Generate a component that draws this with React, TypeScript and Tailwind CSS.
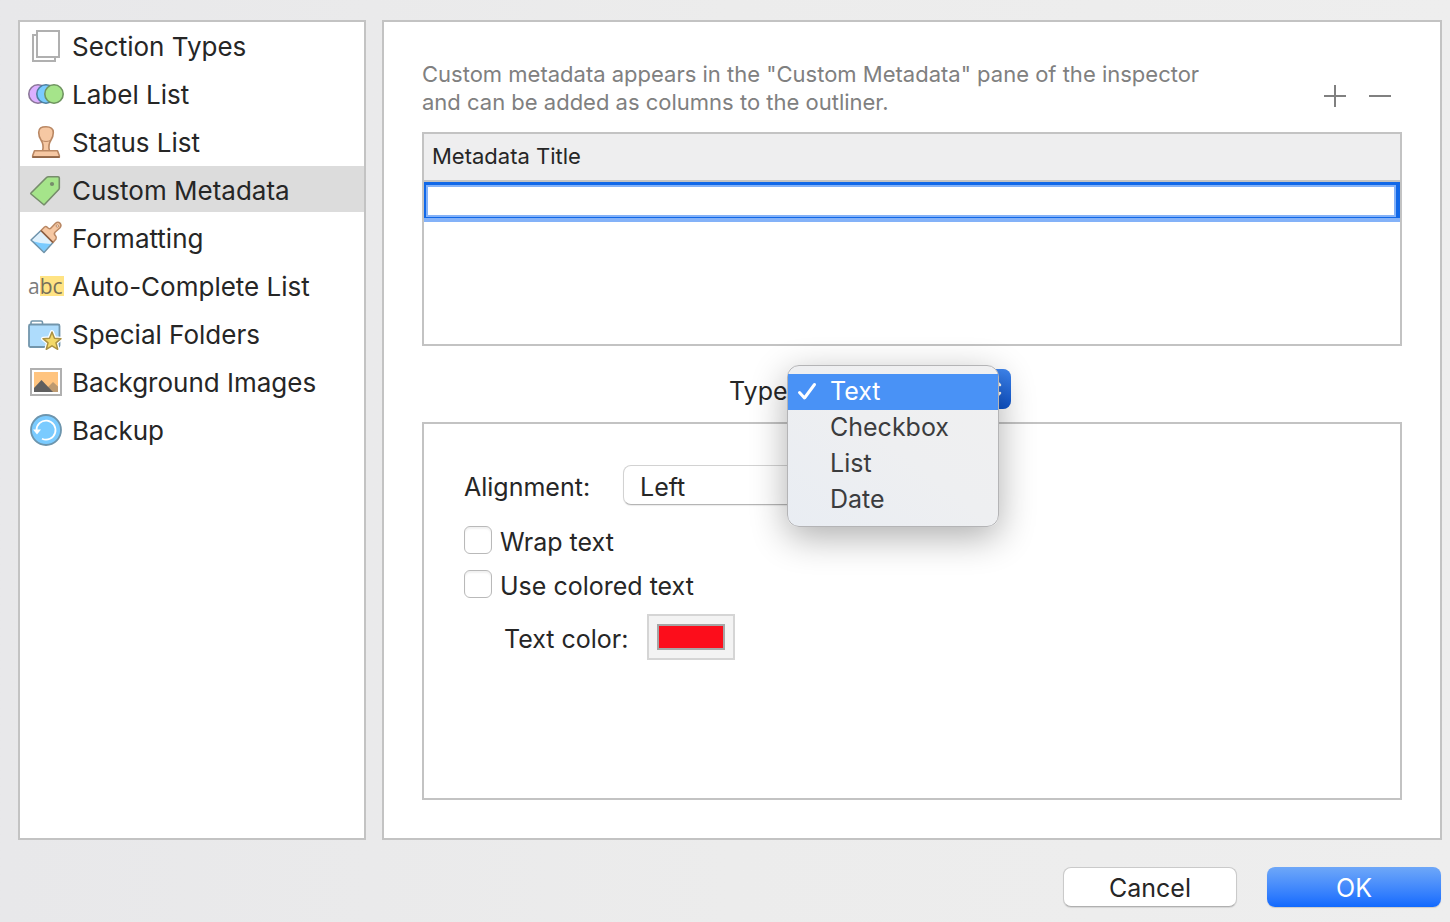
import React, { useState } from 'react';
import { clsx } from 'clsx';

const SectionTypesIcon = () => (
  <svg className="w-9 h-9" viewBox="0 0 36 36" fill="#fff" stroke="#b0b0b0" strokeWidth="2">
    <rect x="5" y="8" width="22" height="26" />
    <rect x="9" y="4" width="22" height="26" />
  </svg>
);

const LabelListIcon = () => (
  <svg className="w-9 h-9" viewBox="0 0 36 36" strokeWidth="1.6">
    <circle cx="10" cy="19" r="9.2" fill="#dcb0ff" stroke="#8a7599" />
    <circle cx="18" cy="19" r="9.2" fill="#7acbff" stroke="#4d7f9e" />
    <circle cx="26" cy="19" r="9.2" fill="#a5e48a" stroke="#6f9460" />
  </svg>
);

const StatusListIcon = () => (
  <svg className="w-9 h-9" viewBox="0 0 36 36" fill="#f6c8a3" stroke="#b98763" strokeWidth="1.6" strokeLinejoin="round">
    <path d="M14.5 28c1.2-4 .8-7.500-1.500-11-1.600-2.500-2.300-4.500-2.300-7.500C10.700 5 13.500 3.800 18 3.800s7.300 1.200 7.300 5.700c0 3-.7 5-2.300 7.500-2.300 3.500-2.700 7-1.500 11z" />
    <path d="M13.500 17.500c3 1.300 6 1.300 9 0" fill="none" strokeWidth="1" />
    <path d="M6.500 27.800h23l1.800 4.700v1.700H4.700v-1.700z" />
    <path d="M4.500 34h27" stroke="#8a5f42" />
  </svg>
);

const CustomMetadataIcon = () => (
  <svg className="w-9 h-9" viewBox="0 0 36 36" strokeLinejoin="round">
    <path d="M3 22 18.500 6.500Q19.300 5.800 20.500 5.800H30Q31.300 5.800 31.300 7V17Q31.300 18 30.500 18.800L16.500 33.500Q16 34 15.500 33.500L3 23Q2.500 22.500 3 22z" fill="#a5e48a" stroke="#768c6b" strokeWidth="1.600" />
    <circle cx="24" cy="13" r="2.100" fill="#768c6b" />
  </svg>
);

const FormattingIcon = () => (
  <svg className="w-9 h-9" viewBox="0 0 36 36" strokeLinejoin="round" strokeWidth="1.500">
    <path d="M3 21 13 11.500 25 23.500 16 33.500z" fill="#dff1fd" />
    <path d="M4 22Q13 25 23 25L16 32.500z" fill="#7acbff" />
    <path d="M13 11.500 3 21 16 33.500 25 23.500" fill="none" stroke="#6d93ab" />
    <path d="M13 11.500 16.500 8Q18 7 19.500 8.500 21.500 10.500 23 9L27.500 4.300Q30 2 32 4.300T31.800 9L27 13.300Q25.500 15 27.500 16.800 29 18.500 28 20L25 23.500z" fill="#f6c8a3" stroke="#b98763" />
    <path d="M13 11.500 25 23.500" stroke="#8a5f42" />
    <circle cx="29.300" cy="7" r="1.200" fill="#fff" stroke="#b98763" strokeWidth="1" />
  </svg>
);

const AutoCompleteIcon = () => (
  <span aria-hidden="true" className="flex w-9 h-5 mt-0.5 justify-end font-['Open_Sans'] text-[21px] leading-5 text-[#7b7b7b]">
    <span>a</span>
    <span className="w-[26px] bg-[#ffe383] text-[#77705a]">bc</span>
  </span>
);

const SpecialFoldersIcon = () => (
  <svg className="w-9 h-9" viewBox="0 0 36 36" strokeLinejoin="round">
    <path d="M3 10V7.500Q3 6 4.500 6H13Q14.500 6 14.500 7.500V10" fill="#fff" stroke="#7396ac" strokeWidth="1.600" />
    <rect x="1" y="9.500" width="30.500" height="22.500" rx="1.500" fill="#aedcfc" stroke="#7396ac" strokeWidth="1.800" />
    <g transform="translate(0 2)">
      <path d="M24 15 26.500 21.300 33 21.700 28 25.800 29.700 32.300 24 28.800 18.300 32.300 20 25.800 15 21.700 21.500 21.300z" fill="#f4d968" stroke="#fff" strokeWidth="4" />
      <path d="M24 15 26.500 21.300 33 21.700 28 25.800 29.700 32.300 24 28.800 18.300 32.300 20 25.800 15 21.700 21.500 21.300z" fill="#f4d968" stroke="#aa9143" strokeWidth="1.500" />
    </g>
  </svg>
);

const BackgroundImagesIcon = () => (
  <svg className="w-9 h-9" viewBox="0 0 36 36">
    <rect x="3" y="6" width="30" height="26" fill="#fff" stroke="#b0b0b0" strokeWidth="2" />
    <rect x="6" y="9" width="24" height="20" fill="#ffc47f" />
    <path d="M18 26 25 19 30 23.500V29H18z" fill="#bd9a70" />
    <path d="M6 25 13.500 17 25 29H6z" fill="#5f5f5f" />
  </svg>
);

const BackupIcon = () => (
  <svg className="w-9 h-9" viewBox="0 0 36 36" fill="none">
    <circle cx="18" cy="19" r="15" fill="#7acbff" stroke="#6d95ad" strokeWidth="1.800" />
    <path d="M8.500 19.500A9.500 9.500 0 1 1 14 27.700" stroke="#fff" strokeWidth="1.800" />
    <path d="M5 18.500h8l-4 5z" fill="#fff" />
  </svg>
);

const sections = [
  { label: 'Section Types', icon: SectionTypesIcon },
  { label: 'Label List', icon: LabelListIcon },
  { label: 'Status List', icon: StatusListIcon },
  { label: 'Custom Metadata', icon: CustomMetadataIcon },
  { label: 'Formatting', icon: FormattingIcon },
  { label: 'Auto-Complete List', icon: AutoCompleteIcon },
  { label: 'Special Folders', icon: SpecialFoldersIcon },
  { label: 'Background Images', icon: BackgroundImagesIcon },
  { label: 'Backup', icon: BackupIcon },
];

const types = ['Text', 'Checkbox', 'List', 'Date'];

const Sidebar: React.FC = () => {
  const [active, setActive] = useState('Custom Metadata');

  return (
    <nav className="w-[348px] shrink-0 bg-white border-2 border-[#c3c3c3]">
      <ul className="flex flex-col gap-0.5">
        {sections.map(({ label, icon: Icon }) => (
          <li key={label}>
            <button
              onClick={() => setActive(label)}
              className={clsx(
                'flex items-center w-full h-[46px] pl-2 gap-2 text-left text-[26px] whitespace-nowrap',
                active === label && 'bg-[#dcdcdc]'
              )}
            >
              <Icon />
              <span className="pt-1">{label}</span>
            </button>
          </li>
        ))}
      </ul>
    </nav>
  );
};

const TypeRow: React.FC = () => {
  const [type, setType] = useState('Text');

  return (
    <div className="relative flex items-center mt-[23px] ml-[307px] gap-2">
      <label htmlFor="type" className="pt-1">Type:</label>
      <div className="relative w-[208px]">
        <select
          id="type"
          value={type}
          onChange={(e) => setType(e.target.value)}
          className="appearance-none w-full h-10 pl-4 rounded-lg bg-white border border-[#d0d0d0]"
        >
          {types.map((t) => (
            <option key={t}>{t}</option>
          ))}
        </select>
        <span className="absolute right-0 top-0 flex items-center justify-center w-8 h-10 rounded-r-lg bg-linear-to-b from-[#3f86f0] to-[#0d54cc] pointer-events-none">
          <svg className="w-4 h-6" viewBox="0 0 16 24" fill="none" stroke="#fff" strokeWidth="2.500" strokeLinecap="round" strokeLinejoin="round">
            <path d="M3 8l5-5 5 5M3 16l5 5 5-5" />
          </svg>
        </span>
      </div>
      <ul
        role="listbox"
        aria-label="Type"
        className="absolute z-10 left-[58px] -top-1 w-[212px] py-2 rounded-xl border border-[#b4b4b6] bg-linear-to-tr from-[#e9edf3] via-[#eeeff1] to-[#f0f0f1] shadow-[0_10px_36px_rgba(0,0,0,0.32)]"
      >
        {types.map((t) => (
          <li
            key={t}
            role="option"
            aria-selected={t === type}
            onClick={() => setType(t)}
            className={clsx(
              'flex items-center h-9 pl-2 pb-0.5 gap-3',
              t === type ? 'bg-[#4992f6] text-white' : 'text-[#3b3c3e]'
            )}
          >
            <svg className="w-[22px] h-[22px]" viewBox="0 0 22 22" fill="none" stroke="currentColor" strokeWidth="3" strokeLinecap="round" strokeLinejoin="round">
              {t === type && <path d="M3.500 12.500 8.500 18 18.500 4.500" />}
            </svg>
            {t}
          </li>
        ))}
      </ul>
    </div>
  );
};

const TextOptions: React.FC = () => (
  <div className="flex-1 flex flex-col items-start mt-[13px] px-10 pt-[41px] border-2 border-[#c3c3c3]">
    <div className="flex items-center">
      <label htmlFor="alignment" className="w-[159px] pt-1">Alignment:</label>
      <select
        id="alignment"
        className="appearance-none w-60 h-10 pl-4 pt-1 rounded-lg bg-white border border-[#d2d2d2] border-b-[#b5b5b5] shadow-[0_1px_1px_rgba(0,0,0,0.08)]"
      >
        <option>Left</option>
        <option>Center</option>
        <option>Right</option>
      </select>
    </div>
    {['Wrap text', 'Use colored text'].map((label, i) => (
      <label key={label} className={clsx('flex items-center h-7 gap-2', i === 0 ? 'mt-[21px]' : 'mt-4')}>
        <input
          type="checkbox"
          className="appearance-none w-7 h-7 rounded-md bg-white border border-[#b9b9b9] shadow-[inset_0_2px_2px_rgba(0,0,0,0.06)] checked:bg-[#4992f6]"
        />
        <span className="pt-1">{label}</span>
      </label>
    ))}
    <div className="flex items-center mt-4 pl-10">
      <label htmlFor="color" className="w-[143px] pt-1">Text color:</label>
      <input
        id="color"
        type="color"
        defaultValue="#fc0d1b"
        className="appearance-none w-[88px] h-[46px] p-2 bg-[#f3f3f3] border-2 border-[#d5d5d5] [&::-webkit-color-swatch-wrapper]:p-0 [&::-webkit-color-swatch]:border-2 [&::-webkit-color-swatch]:border-solid [&::-webkit-color-swatch]:border-[#a6a6a6] [&::-webkit-color-swatch]:rounded-none"
      />
    </div>
  </div>
);

export default function App() {
  return (
    <div className="min-h-screen flex flex-col pt-5 pb-[15px] pl-[18px] pr-2 bg-linear-to-r from-[#e8e8ea] via-[#ececec] to-[#eeeeee] font-['Inter'] text-[25px] leading-8 text-[#262626]">
      <div className="flex-1 flex gap-4">
        <Sidebar />
        <main className="flex-1 flex flex-col p-[38px] bg-white border-2 border-[#c3c3c3]">
          <div className="flex justify-between">
            <p className="max-w-[800px] text-[22px] leading-7 text-[#808080]">
              Custom metadata appears in the "Custom Metadata" pane of the inspector and can be added as columns to the outliner.
            </p>
            <div className="flex items-end pr-[11px] pb-[9px] gap-[23px] text-[#808080]">
              <button aria-label="Add field">
                <svg className="w-[22px] h-[22px]" viewBox="0 0 22 22" stroke="currentColor" strokeWidth="2">
                  <path d="M0 11h22M11 0v22" />
                </svg>
              </button>
              <button aria-label="Remove field">
                <svg className="w-[22px] h-[22px]" viewBox="0 0 22 22" stroke="currentColor" strokeWidth="2">
                  <path d="M0 11h22" />
                </svg>
              </button>
            </div>
          </div>

          <div className="h-[214px] mt-4 border-2 border-[#c3c3c3]">
            <table className="w-full border-separate border-spacing-0">
              <thead>
                <tr>
                  <th className="h-12 pl-2 pb-0.5 bg-[#eeeeef] border-b-2 border-[#c3c3c3] text-left font-normal text-[22px] leading-7">
                    Metadata Title
                  </th>
                </tr>
              </thead>
              <tbody>
                <tr>
                  <td className="p-0">
                    <input
                      aria-label="Metadata Title"
                      className="block w-full h-9 px-2 bg-white outline-none border-2 border-t-[3px] border-r-4 border-b-[1px] border-[#1168e8] shadow-[inset_0_0_0_2px_#84b2f8,0_4px_0_#84b2f8]"
                    />
                  </td>
                </tr>
              </tbody>
            </table>
          </div>

          <TypeRow />
          <TextOptions />
        </main>
      </div>

      <div className="flex justify-end gap-[30px] mt-[27px] pr-px">
        <button className="w-[174px] h-10 pt-0.5 rounded-lg bg-white border border-[#cacaca] border-b-[#b0b0b0] shadow-[0_1px_1px_rgba(0,0,0,0.1)]">
          Cancel
        </button>
        <button className="w-[174px] h-10 pt-0.5 rounded-lg bg-linear-to-b from-[#6ea7f8] to-[#1069fe] text-white shadow-[0_1px_1px_rgba(0,0,0,0.15)]">
          OK
        </button>
      </div>
    </div>
  );
}
